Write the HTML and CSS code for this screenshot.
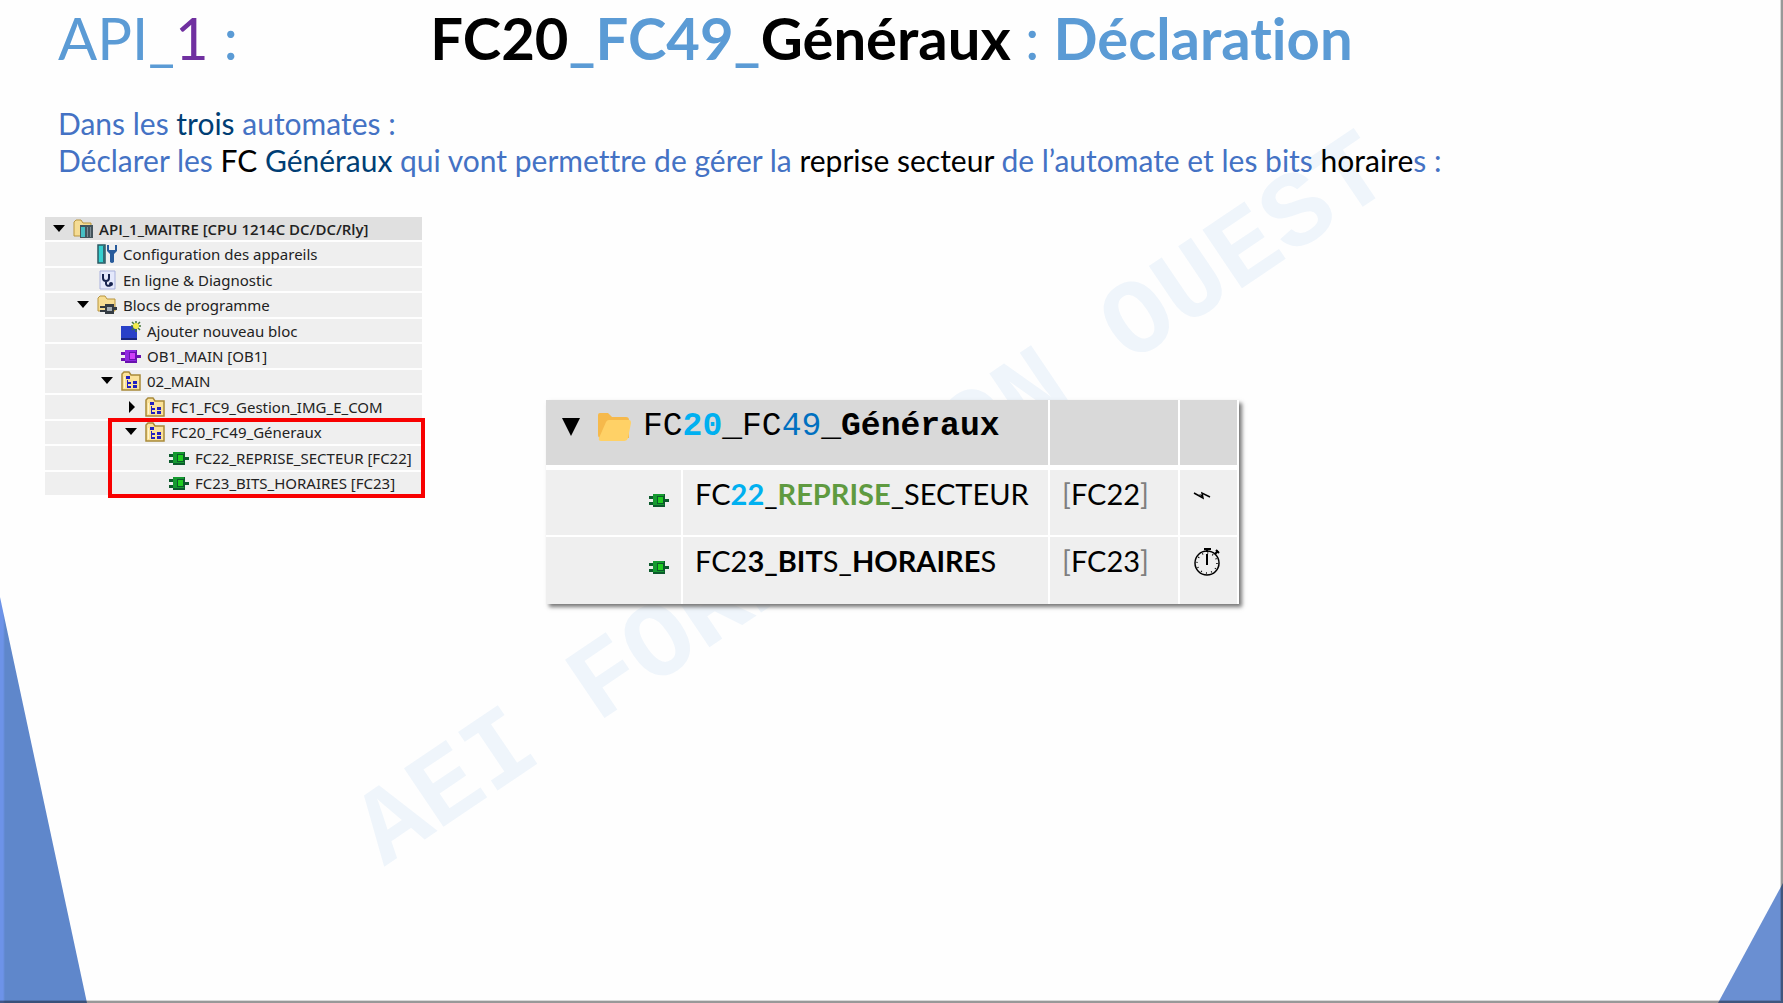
FILE: index.html
```html
<!DOCTYPE html>
<html lang="fr">
<head>
<meta charset="utf-8">
<meta name="viewport" content="width=device-width, initial-scale=1">
<title>FC20_FC49_Généraux : Déclaration</title>
<link rel="stylesheet" href="styles.css">
</head>
<body>
<svg class="symbols" aria-hidden="true">
  <symbol id="open" viewBox="0 0 12 12"><path d="M0 2h12L6 9z"/></symbol>
  <symbol id="closed" viewBox="0 0 12 12"><path d="M4 0l6 6-6 6z"/></symbol>
  <symbol id="block" viewBox="0 0 20 16">
    <path d="M0 4h5v3H0zM0 10h5v3H0zM16 7h4v3h-4z" fill="var(--dark)"/>
    <path d="M4 2h12v13H4z" fill="var(--dark)"/>
    <path d="M4 2h11v11H4z" fill="var(--mid)"/>
    <path d="M8 4h7v8H8z" fill="var(--dark)"/>
    <path d="M9 5h5v6H9z" fill="var(--light)"/>
  </symbol>
  <symbol id="group" viewBox="0 0 20 20">
    <path d="M1 19V3l2-2h5l2 3h9v15z" fill="#fbe29a" stroke="#a98a3a" stroke-width="1.5"/>
    <path d="M3 17V6h1v11z" fill="#fff6cf"/>
    <path d="M5 5h4v3H5zM6 9h1v8H6zM6 11h4v2H6zM6 15h4v2H6zM12 10h4v3h-4zM12 14h4v3h-4z" fill="#2020c0"/>
  </symbol>
</svg>

<main class="slide">
  <p class="watermark" aria-hidden="true">AEI FORMATION OUEST</p>

  <header class="heading">
    <p class="station">API_<span class="violet">1</span> :</p>
    <h1 class="title"><span class="black">FC20</span>_FC49_<span class="black">Généraux</span> <span class="thin">:</span> Déclaration</h1>
  </header>

  <p class="intro">Dans les <span class="navy">trois</span> automates :<br>
  Déclarer les <span class="black">FC</span> <span class="navy">Généraux</span> qui vont permettre de gérer la <span class="black">reprise secteur</span> de l’automate et les bits <span class="black">horaire</span>s :</p>

  <div class="content">
    <div class="project">
      <ul class="tree">
        <li class="row root"><svg class="arrow"><use href="#open"/></svg>
          <svg class="icon" viewBox="0 0 20 20"><path d="M1 17V3l2-2h5l2 3h8v13z" fill="#f5dc94" stroke="#b8953f"/><path d="M7 6h13v13H7z" fill="#44545c"/><path d="M8 8h4v10H8z" fill="#45bfc4"/><path d="M14 8h1v10h-1zM17 8h1v10h-1z" fill="#7d8d95"/></svg>
          API_1_MAITRE [CPU 1214C DC/DC/Rly]</li>
        <li class="row level-1"><span class="arrow"></span>
          <svg class="icon" viewBox="0 0 20 20"><path d="M1 1h7v18H1z" fill="#35d0d0" stroke="#2b5963" stroke-width="1.5"/><path d="M6 2h2v16H6z" fill="#356873"/><path d="M10 1v6l3 3v8q2 2 4 0v-8l3-3V1h-2v5h-6V1z" fill="#285b9b"/></svg>
          Configuration des appareils</li>
        <li class="row level-1"><span class="arrow"></span>
          <svg class="icon" viewBox="0 0 20 20"><path d="M3 1h15v18H3z" fill="#e4e8fb" stroke="#a9b1dc"/><path d="M6 4v4q0 3 3 3t3-3V4M9 11v3q1 3 5 1" fill="none" stroke="#17234f" stroke-width="2"/><circle cx="14" cy="14" r="2" fill="#17234f"/></svg>
          En ligne &amp; Diagnostic</li>
        <li class="row level-1"><svg class="arrow"><use href="#open"/></svg>
          <svg class="icon" viewBox="0 0 20 20"><path d="M1 16V3l2-2h5l2 3h8v12z" fill="#f7dd93" stroke="#b8953f"/><path d="M3 11h5V9h9v3h3v3h-3v4H8v-2H3v-2h5v-2H3z" fill="#353c43"/><path d="M10 12h5v4h-5z" fill="#a6afb5"/></svg>
          Blocs de programme</li>
        <li class="row level-2"><span class="arrow"></span>
          <svg class="icon" viewBox="0 0 20 20"><path d="M0 5h16v14H0z" fill="#2840c8"/><path d="M0 17h16v2H0z" fill="#18267c"/><path d="M15 0v11M10 5h11M11 1l8 8M19 1l-8 8" stroke="#44753b" stroke-width="1.5"/><circle cx="15" cy="5" r="3" fill="#f2ed4c"/></svg>
          Ajouter nouveau bloc</li>
        <li class="row level-2"><span class="arrow"></span><svg class="icon violet-block"><use href="#block"/></svg>
          OB1_MAIN [OB1]</li>
        <li class="row level-2"><svg class="arrow"><use href="#open"/></svg><svg class="icon"><use href="#group"/></svg>
          02_MAIN</li>
        <li class="row level-3"><svg class="arrow"><use href="#closed"/></svg><svg class="icon"><use href="#group"/></svg>
          FC1_FC9_Gestion_IMG_E_COM</li>
        <li class="row level-3"><svg class="arrow"><use href="#open"/></svg><svg class="icon"><use href="#group"/></svg>
          FC20_FC49_Géneraux</li>
        <li class="row level-4"><span class="arrow"></span><svg class="icon green-block"><use href="#block"/></svg>
          FC22_REPRISE_SECTEUR [FC22]</li>
        <li class="row level-4"><span class="arrow"></span><svg class="icon green-block"><use href="#block"/></svg>
          FC23_BITS_HORAIRES [FC23]</li>
      </ul>
      <div class="highlight"></div>
    </div>

    <table class="blocks">
      <colgroup><col class="col-icon"><col class="col-name"><col class="col-ref"><col class="col-sign"></colgroup>
      <thead>
        <tr>
          <th colspan="2" scope="colgroup"><div class="folder-name">
            <svg class="fold" viewBox="0 0 18 18"><path d="M0 0h18L9 18z"/></svg>
            <svg class="folder" viewBox="0 0 34 30"><path d="M1 3q0-2 2-2h8l4 4h14q3 0 3 3v18H4q-3 0-3-3z" fill="#f6b94b"/><path d="M9 10q1-2 3-2h20q2 0 2 3l-3 15q-1 3-4 3H4q-3 0-2-3z" fill="#ffd166"/></svg>
            <span>FC<b class="cyan">20</b>_FC<span class="blue">49</span>_<b>Généraux</b></span></div></th>
          <td></td>
          <td></td>
        </tr>
      </thead>
      <tbody>
        <tr>
          <td class="sign"><svg class="icon green-block"><use href="#block"/></svg></td>
          <td>FC<b class="cyan">22</b>_<b class="green">REPRISE</b>_SECTEUR</td>
          <td><span class="gray">[</span>FC22<span class="gray">]</span></td>
          <td><svg class="mark" viewBox="0 0 28 28" role="img" aria-label="Coupure secteur"><path d="M2 12l9 5-1-5 8 4" fill="none" stroke="#000" stroke-width="1.5"/><path d="M7 13l4 4-1-3z"/></svg></td>
        </tr>
        <tr>
          <td class="sign"><svg class="icon green-block"><use href="#block"/></svg></td>
          <td>FC2<b>3_BIT</b>S_<b>HORAIRE</b>S</td>
          <td><span class="gray">[</span>FC23<span class="gray">]</span></td>
          <td><svg class="mark" viewBox="0 0 28 28" role="img" aria-label="Chronomètre"><circle cx="15" cy="15" r="12" fill="none" stroke="#000" stroke-width="1.5"/><circle cx="15" cy="15" r="10" fill="none" stroke="#000" stroke-width="1.5" stroke-dasharray="1 4.236"/><path d="M12 1h7M15 1v3M15 17V6M23 6l3-3" fill="none" stroke="#000" stroke-width="2"/><path d="M24 2l3 3" stroke="#000" stroke-width="2"/></svg></td>
        </tr>
      </tbody>
    </table>
  </div>
  <div class="corner corner-left"></div>
  <div class="corner corner-right"></div>
  <div class="bevel"></div>
</main>
</body>
</html>
```
FILE: styles.css
```css
* { box-sizing: border-box; }

body {
  margin: 0;
  background: #fefefe;
  color: #000;
  font-family: Lato, "Liberation Sans", sans-serif;
  font-variant-ligatures: none;
}

p, h1, ul { margin: 0; }

.symbols { position: absolute; width: 0; height: 0; }

.slide {
  position: relative;
  isolation: isolate;
  min-height: 100vh;
  overflow: hidden;
}

.watermark {
  position: absolute;
  z-index: -1;
  top: 50%;
  left: 49%;
  transform: translate(-50%, -50%) rotate(-34deg);
  color: #eff5fb;
  font: 700 107px/1 "Liberation Mono", monospace;
  white-space: nowrap;
}

.heading {
  display: grid;
  grid-template-columns: 1fr auto 1fr;
  align-items: baseline;
  padding: 2px 58px 0;
  color: #5b9bd5;
}

.station { font-size: 58px; line-height: 72px; }
.title { font-size: 58px; line-height: 72px; font-weight: 700; }
.thin { font-weight: 400; }
.black { color: #000; }
.navy { color: #003e74; }
.violet { color: #7030a0; }
.cyan { color: #00b0f0; }
.blue { color: #0070c0; }
.green { color: #5f9a40; }
.gray { color: #7f7f7f; }

.intro {
  padding: 31px 58px 0;
  color: #4472c4;
  font-size: 30px;
  line-height: 37px;
}

.content {
  display: grid;
  grid-template-columns: 377px minmax(0, 693px);
  gap: 124px;
  align-items: start;
  padding: 38px 45px;
}

.project { position: relative; }

.tree {
  display: grid;
  grid-auto-rows: 1fr;
  gap: 2px;
  height: 278px;
  padding: 0;
  list-style: none;
  font: 15px/20px "Noto Sans", "Open Sans", sans-serif;
  color: #222;
}

.row {
  display: flex;
  align-items: center;
  padding-left: 8px;
  background: #efefef;
  white-space: nowrap;
}

.root { background: #e0e0e0; font-family: "Open Sans", sans-serif; font-weight: 600; }
.level-1 { padding-left: 32px; }
.level-2 { padding-left: 56px; }
.level-3 { padding-left: 80px; }
.level-4 { padding-left: 104px; }

.arrow { flex: none; width: 12px; height: 12px; margin-right: 8px; }
.icon { flex: none; width: 20px; height: 20px; margin-right: 6px; }

.green-block { --dark: #0c5a2c; --mid: #159a30; --light: #20cc20; }
.violet-block { --dark: #6a12b0; --mid: #9028e0; --light: #d040f8; }

.highlight {
  position: absolute;
  right: -3px;
  bottom: -3px;
  left: 63px;
  height: 80px;
  border: 4px solid #f80000;
}

.blocks {
  width: 100%;
  margin-top: 183px;
  border-collapse: separate;
  border-spacing: 0;
  table-layout: fixed;
  font-size: 29px;
  line-height: 36px;
  box-shadow: 3px 3px 4px #777;
}

.col-icon { width: 137px; }
.col-name { width: 367px; }
.col-ref { width: 130px; }

.blocks td, .blocks th {
  height: 67px;
  padding: 6px 12px 0;
  border-right: 2px solid #fff;
  border-bottom: 2px solid #fff;
  background: #efefef;
  font-weight: 400;
  text-align: left;
  vertical-align: top;
  white-space: nowrap;
}

.blocks thead td, .blocks thead th {
  height: 70px;
  padding-top: 9px;
  border-bottom: 5px solid #fff;
  background: #d9d9d9;
}

.blocks tbody tr:last-child > td { border-bottom: 0; }

.blocks .sign { padding-top: 19px; text-align: right; line-height: 20px; }
.blocks .sign .icon { margin: 0; }

.folder-name {
  display: flex;
  align-items: center;
  padding-left: 4px;
  font: 33px/36px "Liberation Mono", monospace;
}

.fold { width: 18px; height: 18px; margin-right: 17px; }
.folder { width: 34px; height: 30px; margin-right: 12px; }
.mark { display: block; width: 28px; height: 28px; margin-top: 5px; }

.corner { position: absolute; bottom: 0; }

.corner-left {
  left: 0;
  width: 87px;
  height: 406px;
  background: linear-gradient(90deg, #6d93e8 3px, #5f87cb 5px);
  clip-path: polygon(0 0, 100% 100%, 0 100%);
}

.corner-right {
  right: 0;
  width: 65px;
  height: 120px;
  background: #6a8fd2;
  clip-path: polygon(100% 0, 100% 100%, 0 100%);
}

.bevel {
  position: absolute;
  inset: 0;
  border: solid rgba(0, 0, 0, 0.4);
  border-width: 0 2px 2px 0;
  box-shadow: inset -1px -1px rgba(0, 0, 0, 0.15);
  pointer-events: none;
}
```
